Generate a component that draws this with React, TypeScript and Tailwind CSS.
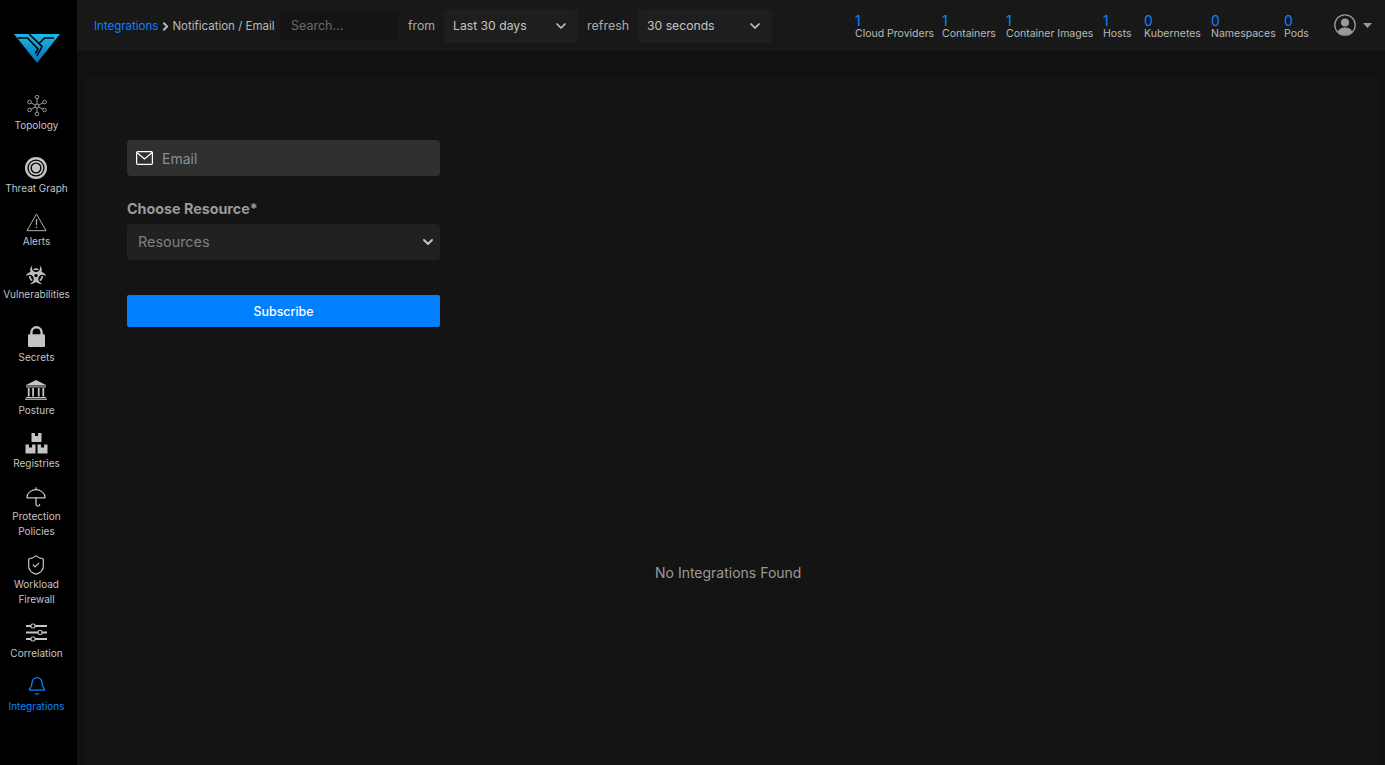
import React from "react";
import { ChevronDown, ChevronRight, ShieldCheck, Bell, Umbrella } from "lucide-react";
import { FaBiohazard } from "react-icons/fa";

const font = "font-['Inter','Liberation_Sans',sans-serif]";

function Logo() {
  return (
    <svg width="46" height="29" viewBox="0 0 46 29" className="block">
      <defs>
        <linearGradient id="lg" x1="0" y1="0" x2="0" y2="1">
          <stop offset="0" stopColor="#19b9e6" />
          <stop offset="1" stopColor="#0a6fb5" />
        </linearGradient>
      </defs>
      <polygon points="0,0 46,0 23,29" fill="url(#lg)" />
      <path d="M4 4H13.5L24 15L21.5 19.5" fill="none" stroke="#000" strokeWidth="1.6" />
      <path d="M15 0L28 12.5L23 22" fill="none" stroke="#000" strokeWidth="1.6" />
      <path d="M40 4H30.5L24.5 10" fill="none" stroke="#000" strokeWidth="1.6" />
    </svg>
  );
}

function Topology() {
  const pts = [[10, 2], [17.5, 7], [17.5, 15], [10, 19], [2.5, 15], [2.5, 7]];
  return (
    <svg width="20" height="21" viewBox="0 0 20 21" fill="none" stroke="#a8a8a8" strokeWidth="0.9">
      {pts.map(([x, y], i) => (
        <g key={i}>
          <line x1="10" y1="11" x2={x} y2={y} />
          <circle cx={x} cy={y} r="1.8" fill="#000" />
        </g>
      ))}
      <circle cx="10" cy="11" r="2" fill="#000" />
    </svg>
  );
}

function Target() {
  return (
    <svg width="22" height="22" viewBox="0 0 23 23">
      <circle cx="11.5" cy="11.5" r="11.5" fill="#c4c4c4" />
      <circle cx="11.5" cy="11.5" r="9" fill="#000" />
      <circle cx="11.5" cy="11.5" r="7.6" fill="#c4c4c4" />
      <circle cx="11.5" cy="11.5" r="5.8" fill="#000" />
      <circle cx="11.5" cy="11.5" r="4.4" fill="#c4c4c4" />
    </svg>
  );
}

function Alert() {
  return (
    <svg width="21" height="19" viewBox="0 0 22 20" fill="none" stroke="#b8b8b8" strokeWidth="1" strokeLinejoin="round">
      <path d="M11 1L21 18.6H1Z" />
      <path d="M11 6.5V12.5" strokeWidth="1.3" />
      <circle cx="11" cy="15" r="0.5" />
    </svg>
  );
}

function Lock() {
  return (
    <svg width="17" height="21" viewBox="0 0 17 21" className="mb-[1px]">
      <path d="M3.4 9V6.4A5.1 5.1 0 0 1 13.6 6.4V9" fill="none" stroke="#c4c4c4" strokeWidth="2.4" />
      <rect x="0" y="8.2" width="17" height="12.8" rx="1.2" fill="#c4c4c4" />
    </svg>
  );
}

function Bank() {
  return (
    <svg width="22" height="20" viewBox="0 0 22 20" fill="#c4c4c4" className="mb-[1px]">
      <polygon points="11,0 22,5.4 0,5.4" />
      <rect x="1" y="6.4" width="20" height="1" />
      <rect x="2.8" y="8" width="1.8" height="8.5" />
      <rect x="7.2" y="8" width="1.8" height="8.5" />
      <rect x="12.8" y="8" width="1.8" height="8.5" />
      <rect x="17.4" y="8" width="1.8" height="8.5" />
      <rect x="1" y="17" width="20" height="1" />
      <rect x="0" y="18.6" width="22" height="1.2" />
    </svg>
  );
}

function Boxes() {
  const Box = ({ x, y }: { x: number; y: number }) => (
    <path d={`M${x} ${y}h3.4v3h3.2v-3H${x + 10}v9H${x}Z`} fill="#c4c4c4" />
  );
  return (
    <svg width="23" height="21" viewBox="0 0 23 21">
      <Box x={6.5} y={0} />
      <Box x={0.5} y={11.5} />
      <Box x={12.5} y={11.5} />
    </svg>
  );
}

function Sliders() {
  return (
    <svg width="21" height="19" viewBox="0 0 21 19" fill="#000" stroke="#c4c4c4" className="mb-[2px]">
      <path d="M0 3H21M0 9.5H21M0 16H21" strokeWidth="1.8" />
      <rect x="5" y="1" width="4" height="4" rx="1.5" strokeWidth="1.2" />
      <rect x="12" y="7.5" width="4" height="4" rx="1.5" strokeWidth="1.2" />
      <rect x="5" y="14" width="4" height="4" rx="1.5" strokeWidth="1.2" />
    </svg>
  );
}

function NavItem({ label, icon, active, tall, extra }: { label: React.ReactNode; icon: React.ReactNode; active?: boolean; tall?: boolean; extra?: boolean }) {
  return (
    <div className={`flex flex-col items-center ${extra ? "pb-[9px]" : "pb-[8px]"}`}>
      <div className={`flex items-end justify-center ${tall ? "h-[40px] pb-[2px]" : "h-[30px] pb-[2px]"}`}>{icon}</div>
      <div className={`text-[10px] leading-[15px] text-center ${active ? "text-[#0a84ff]" : "text-[#c4c4c4]"}`}>{label}</div>
    </div>
  );
}

function Stat({ n, label, width }: { n: number; label: string; width: string }) {
  return (
    <div className={`flex flex-col ${width}`}>
      <span className="text-[14px] leading-[13px] text-[#0a84ff]">{n}</span>
      <span className="text-[10.5px] leading-[13px] text-[#b8b8b8] whitespace-nowrap">{label}</span>
    </div>
  );
}

function Picker({ text, width }: { text: string; width: string }) {
  return (
    <div className={`flex items-center justify-between h-[34px] rounded bg-[#1e1e1e] pl-[9px] pr-[9px] text-[12.2px] text-[#c4c4c4] ${width}`}>
      <span className="pt-[1px]">{text}</span>
      <ChevronDown size={16} strokeWidth={2.6} className="text-[#c4c4c4]" />
    </div>
  );
}

export default function App() {
  return (
    <div className={`${font} flex h-[765px] w-[1385px] overflow-hidden bg-[#111111]`}>
      <aside className="w-[77px] shrink-0 bg-black flex flex-col items-center pr-[4px]">
        <div className="pt-[34px] pb-[25px]"><Logo /></div>
        <NavItem label="Topology" icon={<Topology />} />
        <NavItem label="Threat Graph" icon={<Target />} tall />
        <NavItem label="Alerts" icon={<Alert />} />
        <NavItem label="Vulnerabilities" icon={<FaBiohazard size={20} className="text-[#bdbdbd]" />} />
        <NavItem label="Secrets" icon={<Lock />} tall />
        <NavItem label="Posture" icon={<Bank />} />
        <NavItem label="Registries" icon={<Boxes />} />
        <NavItem label={<>Protection<br />Policies</>} icon={<Umbrella size={22} strokeWidth={1.4} className="text-[#c4c4c4] -mb-[1px]" />} />
        <NavItem extra label={<>Workload<br />Firewall</>} icon={<ShieldCheck size={22} strokeWidth={1.3} className="text-[#c4c4c4] -mb-[1px]" />} />
        <NavItem label="Correlation" icon={<Sliders />} />
        <NavItem label="Integrations" active icon={<Bell size={20} strokeWidth={1.6} className="text-[#0a84ff] mb-[1px]" />} />
      </aside>
      <div className="flex-1 flex flex-col min-w-0">
        <header className="h-[51px] shrink-0 bg-[#181818] flex items-center pl-[17px] pr-[13px]">
          <div className="flex items-center text-[11.5px] whitespace-nowrap w-[186px] pt-[2px]">
            <span className="text-[#0a84ff]">Integrations</span>
            <ChevronRight size={13} strokeWidth={3.6} className="text-[#b8b8b8] mx-[0.5px]" />
            <span className="text-[#b8b8b8]">Notification / Email</span>
          </div>
          <div className="w-[118px] h-[28px] rounded bg-[#141414] flex items-center pl-[11px] pt-[1px] text-[12.5px] text-[#6a6a6a]">Search...</div>
          <span className="ml-[10px] pt-[1px] text-[12.3px] text-[#a8a8a8] w-[36px]">from</span>
          <Picker text="Last 30 days" width="w-[134px]" />
          <span className="ml-[9px] pt-[1px] text-[12.5px] text-[#a8a8a8] w-[51px]">refresh</span>
          <Picker text="30 seconds" width="w-[134px]" />
          <div className="ml-[83px] flex gap-[9px] pt-[2px]">
            <Stat n={1} label="Cloud Providers" width="w-[78px]" />
            <Stat n={1} label="Containers" width="w-[55px]" />
            <Stat n={1} label="Container Images" width="w-[88px]" />
            <Stat n={1} label="Hosts" width="w-[32px]" />
            <Stat n={0} label="Kubernetes" width="w-[58px]" />
            <Stat n={0} label="Namespaces" width="w-[64px]" />
            <Stat n={0} label="Pods" width="w-[25px]" />
          </div>
          <div className="ml-auto flex items-center gap-[7px]">
            <svg width="22" height="22" viewBox="0 0 22 22" className="mb-[2px]">
              <circle cx="11" cy="11" r="10.2" fill="none" stroke="#9a9a9a" strokeWidth="1.3" />
              <circle cx="11" cy="8.6" r="4" fill="#9a9a9a" />
              <path d="M3.8 18C5 14.5 8 13.6 11 13.6S17 14.5 18.2 18A10 10 0 0 1 3.8 18Z" fill="#9a9a9a" />
            </svg>
            <svg width="9" height="5" viewBox="0 0 9 5"><polygon points="0,0 9,0 4.5,5" fill="#9a9a9a" /></svg>
          </div>
        </header>
        <main className="flex-1 min-h-0 pl-[8px] pr-[6px] pt-[27px]">
          <div className="h-full bg-[#141414] flex flex-col px-[42px] pt-[62px] relative">
            <div className="w-[313px]">
              <div className="h-[36px] rounded bg-[#303030] flex items-center pl-[9px]">
                <svg width="17" height="14" viewBox="0 0 17 14" fill="none" stroke="#fff" strokeWidth="1.2">
                  <rect x="0.6" y="0.6" width="15.8" height="12.8" rx="1.2" />
                  <path d="M0.8 1.5L8.5 8L16.2 1.5" />
                </svg>
                <span className="ml-[9px] text-[14px] text-[#8a8f94]">Email</span>
              </div>
              <div className="mt-[24px] text-[14.3px] font-bold leading-[18px] text-[#9a9a9a]">Choose Resource*</div>
              <div className="mt-[6px] h-[36px] rounded bg-[#212121] flex items-center justify-between pl-[11px] pr-[4px] text-[14.4px] text-[#808080]">
                <span className="pb-[1px]">Resources</span>
                <ChevronDown size={16} strokeWidth={3} className="text-[#c4c4c4]" />
              </div>
              <div className="mt-[35px] h-[32px] rounded-[2px] bg-[#007fff] flex items-center justify-center pt-[2px] text-[12.4px] font-medium text-white">Subscribe</div>
            </div>
            <div className="absolute left-[570px] top-[484px] text-[14px] text-[#9a9a9a]">No Integrations Found</div>
          </div>
        </main>
      </div>
    </div>
  );
}
